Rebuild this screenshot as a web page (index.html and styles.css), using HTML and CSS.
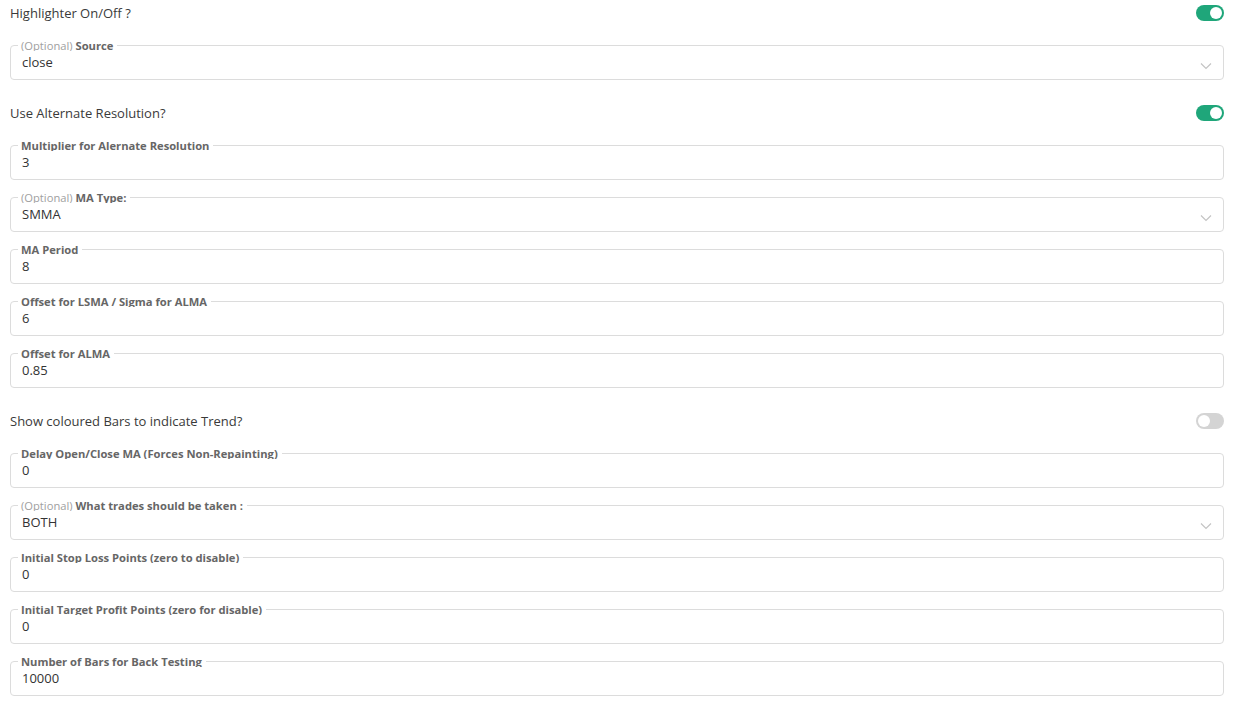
FILE: index.html
```html
<!DOCTYPE html>
<html lang="en">
<head>
  <meta charset="UTF-8" />
  <title>Strategy Inputs</title>
  <meta name="viewport" content="width=device-width, initial-scale=1.0" />
  <link rel="stylesheet" href="styles.css">
</head>
<body>
  <div class="inputs">
    <div class="switch-row">
      <span>Highlighter On/Off ?</span>
      <span class="switch on"></span>
    </div>

    <fieldset class="field select">
      <legend><em>(Optional)</em> Source</legend>
      <div class="value">close</div>
      <svg class="chevron" viewBox="0 0 12 8" width="12" height="8"><path d="M1 1.5 L6 6.5 L11 1.5" /></svg>
    </fieldset>

    <div class="switch-row">
      <span>Use Alternate Resolution?</span>
      <span class="switch on"></span>
    </div>

    <fieldset class="field">
      <legend>Multiplier for Alernate Resolution</legend>
      <div class="value">3</div>
    </fieldset>

    <fieldset class="field select">
      <legend><em>(Optional)</em> MA Type:</legend>
      <div class="value">SMMA</div>
      <svg class="chevron" viewBox="0 0 12 8" width="12" height="8"><path d="M1 1.5 L6 6.5 L11 1.5" /></svg>
    </fieldset>

    <fieldset class="field">
      <legend>MA Period</legend>
      <div class="value">8</div>
    </fieldset>

    <fieldset class="field">
      <legend>Offset for LSMA / Sigma for ALMA</legend>
      <div class="value">6</div>
    </fieldset>

    <fieldset class="field">
      <legend>Offset for ALMA</legend>
      <div class="value">0.85</div>
    </fieldset>

    <div class="switch-row">
      <span>Show coloured Bars to indicate Trend?</span>
      <span class="switch"></span>
    </div>

    <fieldset class="field">
      <legend>Delay Open/Close MA (Forces Non-Repainting)</legend>
      <div class="value">0</div>
    </fieldset>

    <fieldset class="field select">
      <legend><em>(Optional)</em> What trades should be taken :</legend>
      <div class="value">BOTH</div>
      <svg class="chevron" viewBox="0 0 12 8" width="12" height="8"><path d="M1 1.5 L6 6.5 L11 1.5" /></svg>
    </fieldset>

    <fieldset class="field">
      <legend>Initial Stop Loss Points (zero to disable)</legend>
      <div class="value">0</div>
    </fieldset>

    <fieldset class="field">
      <legend>Initial Target Profit Points (zero for disable)</legend>
      <div class="value">0</div>
    </fieldset>

    <fieldset class="field">
      <legend>Number of Bars for Back Testing</legend>
      <div class="value">10000</div>
    </fieldset>
  </div>
</body>
</html>
```

FILE: styles.css
```css
body { margin:0; font-family:'Open Sans','Liberation Sans',sans-serif; background:#fff; color:#333; }
.inputs { display:flex; flex-direction:column; gap:11px; padding:0 15px 0 10px; margin-top:-9px; }

/* on/off rows */
.switch-row { box-sizing:border-box; height:37px; padding-top:6px; display:flex; align-items:center; justify-content:space-between; font-size:13px; color:#3a3a3a; }
.switch { position:relative; width:28px; height:16px; border-radius:8px; background:#d4d4d4; }
.switch::after { content:""; position:absolute; top:2px; left:2px; width:12px; height:12px; border-radius:50%; background:#fff; }
.switch.on { background:#1fa67a; }
.switch.on::after { left:14px; }

/* outlined input boxes */
.field { position:relative; margin:0; padding:0 10px 8px 11px; border:1px solid #dcdcdc; border-radius:4px; min-width:0; }
.field legend { padding:0 4px 0 3px; margin-left:-4px; font-size:11.2px; line-height:13px; height:12px; overflow:hidden; font-weight:700; color:#666; }
.field legend em { font-style:normal; font-weight:400; color:#a0a0a0; }
.field .value { font-size:13px; line-height:17px; margin-top:3px; color:#333; }
.chevron { position:absolute; right:11px; top:11px; fill:none; stroke:#c4c4c4; stroke-width:1.2; }
```
